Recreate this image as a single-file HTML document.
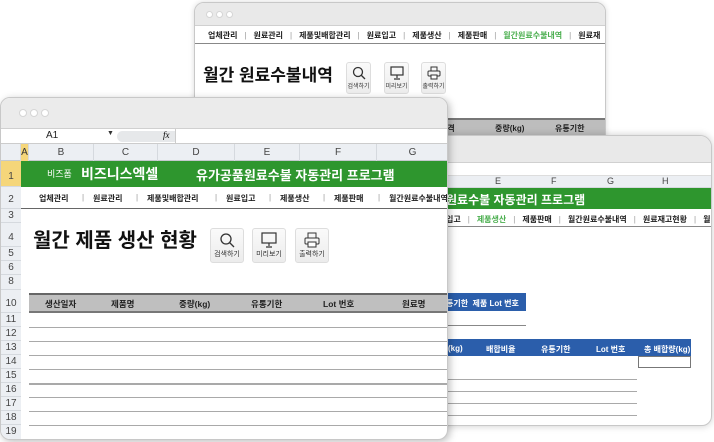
<!DOCTYPE html>
<html><head><meta charset="utf-8"><style>
*{margin:0;padding:0;box-sizing:border-box}
body{width:714px;height:442px;background:#fff;position:relative;overflow:hidden;font-family:"Liberation Sans","Noto Sans CJK KR",sans-serif}
.a{position:absolute}
.win{position:absolute;background:#fff;border:1px solid #c8c8c8;overflow:hidden}
.tb{position:absolute;left:0;right:0;top:0;background:#e9e9e9;border-bottom:1px solid #d0d0d0}
.dot{position:absolute;width:7px;height:7px;border-radius:50%;background:#fff;border:1px solid #d5d5d5}
.nav{position:absolute;font-size:8px;white-space:nowrap;color:#222;font-weight:bold}
.nav span.s{color:#999;margin:0 7px;font-weight:normal}
.n{position:absolute;font-size:8px;white-space:nowrap;color:#222;font-weight:bold}
.sp{position:absolute;font-size:8px;color:#999}
.btn{position:absolute;width:25px;height:32px;border:1px solid #ddd;border-radius:3px;background:linear-gradient(#fafafa,#ececec);font-size:6px;text-align:center;color:#333}
.btn svg{display:block;margin:3px auto 1px}
.rh{position:absolute;left:0;width:20px;text-align:center;font-size:10px;color:#444;background:#eceff3;border-bottom:1px solid #d5d9de}
.ch{position:absolute;top:0;height:17px;font-size:10px;color:#444;text-align:center;line-height:17px;border-right:1px solid #d5d9de}
.hl{position:absolute;height:1px;background:#a9a9a9}
.bh{position:absolute;font-size:8px;color:#fff;font-weight:bold}
</style></head><body>

<!-- back top window -->
<div class="win" style="left:194px;top:2px;width:412px;height:160px;border-radius:10px 10px 0 0;box-shadow:0 0 6px rgba(0,0,0,.15)">
 <div class="tb" style="height:23px"></div>
 <div class="dot" style="left:11px;top:8px"></div><div class="dot" style="left:21px;top:8px"></div><div class="dot" style="left:31px;top:8px"></div>
 <div class="nav" style="left:13px;top:27px">업체관리<span class="s">|</span>원료관리<span class="s">|</span>제품및배합관리<span class="s">|</span>원료입고<span class="s">|</span>제품생산<span class="s">|</span>제품판매<span class="s">|</span><span style="color:#4caf50">월간원료수불내역</span><span class="s">|</span>원료재</div>
 <div class="a" style="left:0;right:0;top:40px;height:1px;background:#888"></div>
 <div class="a" style="left:8px;top:58px;font-size:17px;font-weight:bold;color:#111">월간 원료수불내역</div>
 <div class="btn" style="left:151px;top:59px"><svg width="14" height="14"><circle cx="6" cy="6" r="4.5" fill="none" stroke="#333" stroke-width="1.3"/><path d="M9 9l4 4" stroke="#333" stroke-width="1.3"/></svg>검색하기</div>
 <div class="btn" style="left:189px;top:59px"><svg width="14" height="14"><rect x="1" y="1" width="12" height="8" fill="none" stroke="#333" stroke-width="1.2"/><path d="M7 9v3M4 13h6" stroke="#333" stroke-width="1.2"/></svg>미리보기</div>
 <div class="btn" style="left:226px;top:59px"><svg width="14" height="14"><rect x="4" y="1" width="6" height="4" fill="none" stroke="#333"/><rect x="1" y="5" width="12" height="5" rx="1" fill="none" stroke="#333"/><rect x="4" y="9" width="6" height="4" fill="#fff" stroke="#333"/></svg>출력하기</div>
 <div class="a" style="left:0;right:0;top:115px;height:17px;background:#bdbdbd;border-top:2px solid #777"></div>
 <div class="bh" style="left:245px;top:120px;color:#222">부격</div>
 <div class="bh" style="left:300px;top:120px;color:#222">중량(kg)</div>
 <div class="bh" style="left:360px;top:120px;color:#222">유통기한</div>
</div>

<!-- right window -->
<div class="win" style="left:400px;top:135px;width:312px;height:291px;border-radius:10px 12px 10px 10px;box-shadow:0 0 8px rgba(0,0,0,.2)">
 <div class="tb" style="height:27px"></div>
 <div class="a" style="left:0;right:0;top:28px;height:12px;background:#fff;border-bottom:1px solid #ddd"></div>
 <div class="a" style="left:0;right:0;top:40px;height:12px;background:#eceff3;border-bottom:1px solid #d5d9de"></div>
 <div class="a" style="left:94px;top:40px;font-size:9px;color:#444">E</div>
 <div class="a" style="left:150px;top:40px;font-size:9px;color:#444">F</div>
 <div class="a" style="left:206px;top:40px;font-size:9px;color:#444">G</div>
 <div class="a" style="left:261px;top:40px;font-size:9px;color:#444">H</div>
 <div class="a" style="left:0;right:0;top:52px;height:21px;background:#2e962e"></div>
 <div class="a" style="left:45px;top:55px;font-size:12px;color:#fff;font-weight:bold">원료수불 자동관리 프로그램</div>
 <div class="nav" style="left:45px;top:78px">입고<span class="s">|</span><span style="color:#4caf50">제품생산</span><span class="s">|</span>제품판매<span class="s">|</span>월간원료수불내역<span class="s">|</span>원료재고현황<span class="s">|</span>월</div>
 <div class="a" style="left:0;right:0;top:90px;height:1px;background:#888"></div>
 <div class="a" style="left:45px;top:157px;width:80px;height:18px;background:#2b5eab"></div>
 <div class="bh" style="left:45px;top:162px">통기한&nbsp;&nbsp;제품 Lot 번호</div>
 <div class="a" style="left:45px;top:189px;width:80px;height:1px;background:#888"></div>
 <div class="a" style="left:45px;top:203px;width:245px;height:17px;background:#2b5eab"></div>
 <div class="bh" style="left:47px;top:208px">(kg)</div>
 <div class="bh" style="left:85px;top:208px">배합비율</div>
 <div class="bh" style="left:140px;top:208px">유통기한</div>
 <div class="bh" style="left:195px;top:208px">Lot 번호</div>
 <div class="bh" style="left:243px;top:208px">총 배합량(kg)</div>
 <div class="a" style="left:237px;top:220px;width:53px;height:12px;border:1px solid #777"></div>
 <div class="hl" style="left:45px;top:243px;width:191px"></div>
 <div class="hl" style="left:45px;top:255px;width:191px"></div>
 <div class="hl" style="left:45px;top:267px;width:191px"></div>
 <div class="hl" style="left:45px;top:279px;width:191px"></div>
</div>

<!-- front window -->
<div class="win" style="left:0;top:97px;width:448px;height:343px;border-radius:10px 10px 10px 10px;box-shadow:2px 2px 8px rgba(0,0,0,.25)">
 <div class="tb" style="height:31px;background:#ebebeb"></div>
 <div class="dot" style="left:18px;top:11px;width:8px;height:8px"></div><div class="dot" style="left:29px;top:11px;width:8px;height:8px"></div><div class="dot" style="left:40px;top:11px;width:8px;height:8px"></div>
 <div class="a" style="left:0;right:0;top:31px;height:15px;background:#fff;border-bottom:1px solid #ccc"></div>
 <div class="a" style="left:45px;top:32px;font-size:10px;color:#222">A1</div>
 <div class="a" style="left:106px;top:32px;font-size:7px;color:#333">▼</div>
 <div class="a" style="left:116px;top:33px;width:58px;height:11px;background:#e6e8ea;border-radius:6px 0 0 6px"></div>
 <div class="a" style="left:162px;top:32px;font-size:9px;font-style:italic;font-family:'Liberation Serif',serif">fx</div>
 <div class="a" style="left:174px;top:31px;width:1px;height:15px;background:#ccc"></div>
 <div class="a" style="left:0;right:0;top:46px;height:17px;background:#eceff3;border-bottom:1px solid #c5c9ce">
  <div class="ch" style="left:0;width:20px"></div>
  <div class="ch" style="left:20px;width:8px;background:#f5d67a;color:#333">A</div>
  <div class="ch" style="left:28px;width:65px">B</div>
  <div class="ch" style="left:93px;width:64px">C</div>
  <div class="ch" style="left:157px;width:77px">D</div>
  <div class="ch" style="left:234px;width:65px">E</div>
  <div class="ch" style="left:299px;width:77px">F</div>
  <div class="ch" style="left:376px;width:72px">G</div>
 </div>
 <div class="rh" style="top:63px;height:26px;line-height:32px;background:#f5d67a">1</div>
 <div class="rh" style="top:89px;height:22px;line-height:26px">2</div>
 <div class="rh" style="top:111px;height:14px;line-height:14px">3</div>
 <div class="rh" style="top:125px;height:24px;line-height:30px">4</div>
 <div class="rh" style="top:149px;height:14px;line-height:14px">5</div>
 <div class="rh" style="top:163px;height:14px;line-height:14px">6</div>
 <div class="rh" style="top:177px;height:15px;line-height:14px">8</div>
 <div class="rh" style="top:192px;height:23px;line-height:28px">10</div>
 <div class="rh" style="top:215px;height:14px;line-height:14px">11</div>
 <div class="rh" style="top:229px;height:14px;line-height:14px">12</div>
 <div class="rh" style="top:243px;height:14px;line-height:14px">13</div>
 <div class="rh" style="top:257px;height:14px;line-height:14px">14</div>
 <div class="rh" style="top:271px;height:14px;line-height:14px">15</div>
 <div class="rh" style="top:285px;height:14px;line-height:14px">16</div>
 <div class="rh" style="top:299px;height:14px;line-height:14px">17</div>
 <div class="rh" style="top:313px;height:14px;line-height:14px">18</div>
 <div class="rh" style="top:327px;height:16px;line-height:14px">19</div>
 <div class="a" style="left:20px;right:0;top:63px;height:26px;background:#2e962e"></div>
 <div class="a" style="left:46px;top:69px;font-size:9px;color:#fff">비즈폼</div>
 <div class="a" style="left:80px;top:66px;font-size:14px;font-weight:bold;color:#fff">비즈니스엑셀</div>
 <div class="a" style="left:195px;top:67px;font-size:13px;font-weight:bold;color:#fff">유가공품원료수불 자동관리 프로그램</div>
 <div class="n" style="left:38px;top:95px">업체관리</div><div class="sp" style="left:81px;top:95px">|</div>
 <div class="n" style="left:92px;top:95px">원료관리</div><div class="sp" style="left:135px;top:95px">|</div>
 <div class="n" style="left:146px;top:95px">제품및배합관리</div><div class="sp" style="left:214px;top:95px">|</div>
 <div class="n" style="left:225px;top:95px">원료입고</div><div class="sp" style="left:268px;top:95px">|</div>
 <div class="n" style="left:279px;top:95px">제품생산</div><div class="sp" style="left:322px;top:95px">|</div>
 <div class="n" style="left:333px;top:95px">제품판매</div><div class="sp" style="left:377px;top:95px">|</div>
 <div class="n" style="left:388px;top:95px">월간원료수불내역</div>
 <div class="a" style="left:20px;right:0;top:110px;height:1px;background:#666"></div>
 <div class="a" style="left:32px;top:126px;font-size:20px;font-weight:bold;color:#111">월간 제품 생산 현황</div>
 <div class="btn" style="left:209px;top:130px;width:34px;height:35px;font-size:7px"><svg width="16" height="16"><circle cx="7" cy="7" r="5" fill="none" stroke="#333" stroke-width="1.3"/><path d="M10.5 10.5l4.5 4.5" stroke="#333" stroke-width="1.3"/></svg>검색하기</div>
 <div class="btn" style="left:251px;top:130px;width:34px;height:35px;font-size:7px"><svg width="16" height="16"><rect x="1" y="1" width="14" height="10" fill="none" stroke="#333" stroke-width="1.2"/><path d="M8 11v3M5 15h6" stroke="#333" stroke-width="1.2"/></svg>미리보기</div>
 <div class="btn" style="left:294px;top:130px;width:34px;height:35px;font-size:7px"><svg width="16" height="16"><rect x="4" y="1" width="8" height="5" fill="none" stroke="#333"/><rect x="1" y="6" width="14" height="6" rx="1" fill="none" stroke="#333"/><rect x="4" y="10" width="8" height="5" fill="#fff" stroke="#333"/></svg>출력하기</div>
 <div class="a" style="left:28px;right:0;top:195px;height:20px;background:#bfbfbf;border-top:2px solid #666;border-bottom:2px solid #777"></div>
 <div class="a" style="left:44px;top:200px;font-size:8.5px;font-weight:bold;color:#222">생산일자</div>
 <div class="a" style="left:110px;top:200px;font-size:8.5px;font-weight:bold;color:#222">제품명</div>
 <div class="a" style="left:178px;top:200px;font-size:8.5px;font-weight:bold;color:#222">중량(kg)</div>
 <div class="a" style="left:250px;top:200px;font-size:8.5px;font-weight:bold;color:#222">유통기한</div>
 <div class="a" style="left:322px;top:200px;font-size:8.5px;font-weight:bold;color:#222">Lot 번호</div>
 <div class="a" style="left:401px;top:200px;font-size:8.5px;font-weight:bold;color:#222">원료명</div>
 <div class="hl" style="left:28px;right:0;top:229px"></div>
 <div class="hl" style="left:28px;right:0;top:243px"></div>
 <div class="hl" style="left:28px;right:0;top:257px"></div>
 <div class="hl" style="left:28px;right:0;top:271px"></div>
 <div class="hl" style="left:28px;right:0;top:285px;height:2px"></div>
 <div class="hl" style="left:28px;right:0;top:299px"></div>
 <div class="hl" style="left:28px;right:0;top:313px"></div>
 <div class="hl" style="left:28px;right:0;top:327px"></div>
</div>
</body></html>
